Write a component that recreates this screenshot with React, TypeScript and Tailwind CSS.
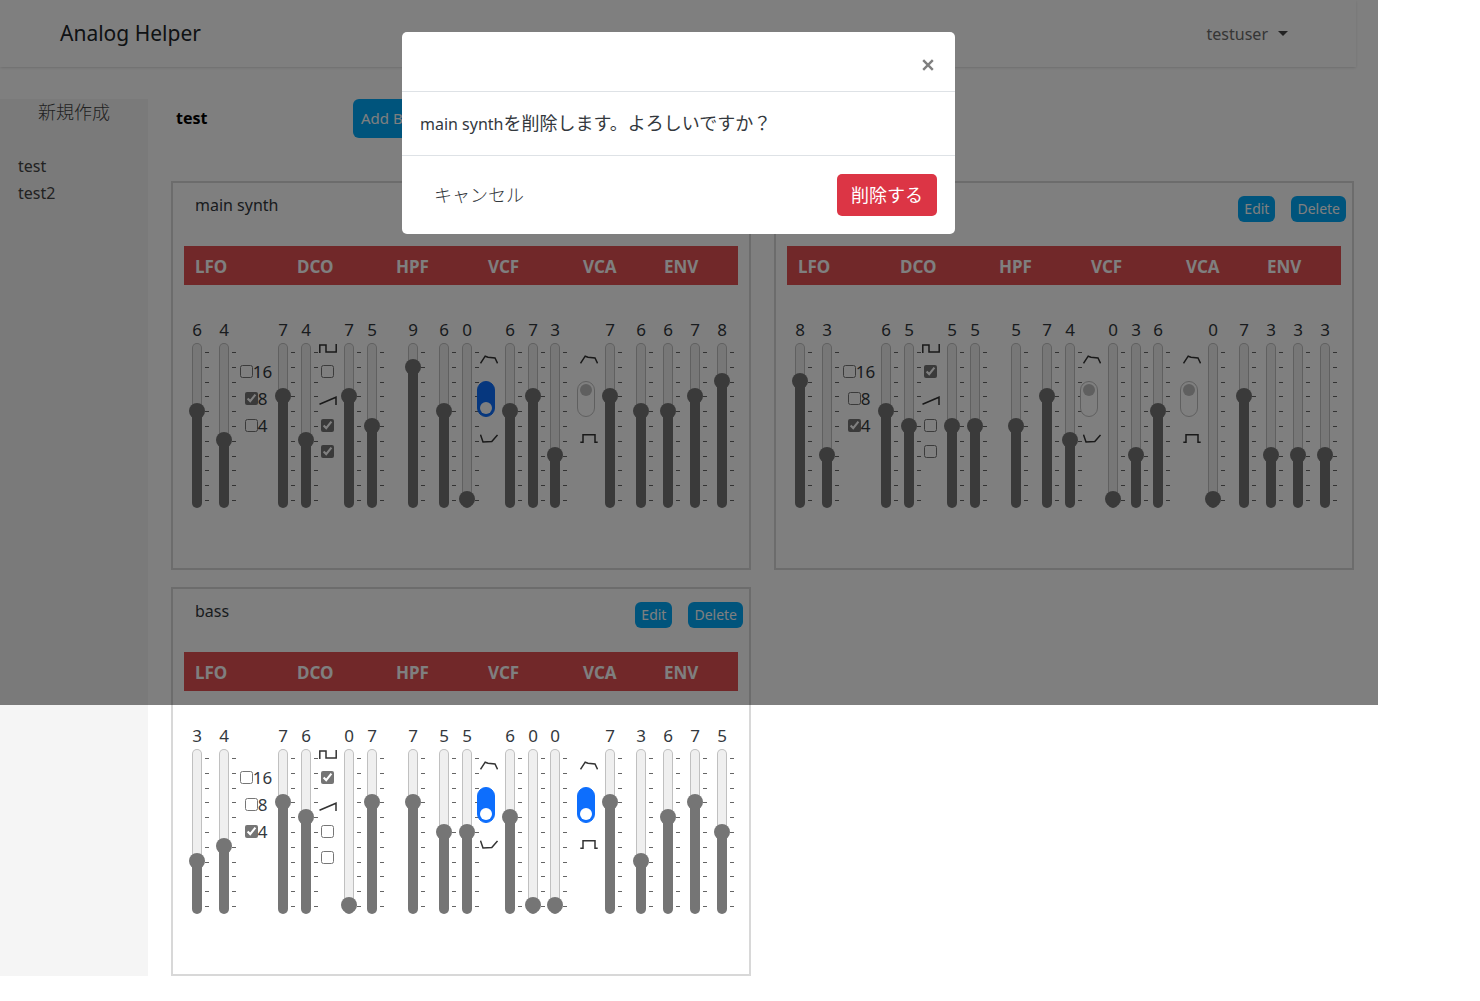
import React, { useState } from "react";

type Patch = {
  name: string;
  lfo: number[];
  octave: number;
  dcoA: number[];
  waves: boolean[];
  dcoB: number[];
  hpf: number;
  vcfA: number[];
  vcfPolarity: boolean;
  vcfB: number[];
  vcaMode: boolean;
  vca: number;
  env: number[];
};

const patches: Patch[] = [
  {
    name: "main synth",
    lfo: [6, 4],
    octave: 8,
    dcoA: [7, 4],
    waves: [false, true, true],
    dcoB: [7, 5],
    hpf: 9,
    vcfA: [6, 0],
    vcfPolarity: true,
    vcfB: [6, 7, 3],
    vcaMode: false,
    vca: 7,
    env: [6, 6, 7, 8],
  },
  {
    name: "sub synth",
    lfo: [8, 3],
    octave: 4,
    dcoA: [6, 5],
    waves: [true, false, false],
    dcoB: [5, 5],
    hpf: 5,
    vcfA: [7, 4],
    vcfPolarity: false,
    vcfB: [0, 3, 6],
    vcaMode: false,
    vca: 0,
    env: [7, 3, 3, 3],
  },
  {
    name: "bass",
    lfo: [3, 4],
    octave: 4,
    dcoA: [7, 6],
    waves: [true, false, false],
    dcoB: [0, 7],
    hpf: 7,
    vcfA: [5, 5],
    vcfPolarity: true,
    vcfB: [6, 0, 0],
    vcaMode: true,
    vca: 7,
    env: [3, 6, 7, 5],
  },
];

function Fader({ label, initial }: { label: string; initial: number }) {
  const [value, setValue] = useState(initial);
  const stop = `${8 + value * 15}px`;
  return (
    <label className="block min-w-0">
      <span className="flex h-[26px] w-[10px] items-center justify-center">{value}</span>
      <span className="flex gap-[3px]">
        <input
          type="range"
          aria-label={label}
          min={0}
          max={10}
          value={value}
          onChange={(e) => setValue(Number(e.target.value))}
          className="m-0 block h-[165px] w-[10px] shrink-0 appearance-none rounded-full border border-transparent [direction:rtl] [writing-mode:vertical-lr] [&::-webkit-slider-thumb]:-mr-[4px] [&::-webkit-slider-thumb]:-ml-[4px] [&::-webkit-slider-thumb]:h-4 [&::-webkit-slider-thumb]:w-4 [&::-webkit-slider-thumb]:appearance-none [&::-webkit-slider-thumb]:rounded-full [&::-webkit-slider-thumb]:bg-[#757575]"
          style={{
            background: `linear-gradient(to top, #757575 ${stop}, transparent ${stop}) border-box, linear-gradient(#efefef, #efefef) padding-box, linear-gradient(#c0c0c0, #c0c0c0) border-box`,
          }}
        />
        <span className="mt-[9px] flex h-[149px] w-1 shrink-0 flex-col justify-between">
          {Array.from({ length: 11 }, (_, i) => (
            <span key={i} className="h-px w-1 bg-[#666]" />
          ))}
        </span>
      </span>
    </label>
  );
}

function Glyph({ d, className }: { d: string; className: string }) {
  return (
    <svg viewBox="0 0 18 9" className={className} fill="none" stroke="#333" strokeWidth="1.5" aria-hidden="true">
      <path d={d} />
    </svg>
  );
}

const glyphs = {
  square: "M.8 9V1h6.200v7h10.200V0",
  ramp: "M.5 8.3 17 1.200V9",
  envelope: "M.5 8.3 5.2 1.2 8 2.3l7 .7 2.6 5.3",
  inverse: "M.5.7 3 8l8.800-.6L17.500.9",
  gate: "M.3 8.200h2.700V.8h12v7.400h2.700",
};

function Check({ label, initial }: { label: string; initial: boolean }) {
  return (
    <input
      type="checkbox"
      aria-label={label}
      defaultChecked={initial}
      className="m-0 h-[13px] w-[13px] shrink-0 accent-[#757575]"
    />
  );
}

function Toggle({ label, initial }: { label: string; initial: boolean }) {
  return (
    <input
      type="checkbox"
      role="switch"
      aria-label={label}
      defaultChecked={initial}
      className="m-0 block h-9 w-[18px] appearance-none rounded-full border border-[#bfbfbf] bg-white pt-[2px] pl-[2px] before:block before:h-3 before:w-3 before:rounded-full before:bg-[#bfbfbf] checked:border-[#0d6efd] checked:bg-[#0d6efd] checked:pt-5 checked:before:bg-white"
    />
  );
}

function ToggleColumn({ label, initial, lower }: { label: string; initial: boolean; lower: string }) {
  return (
    <div className="min-w-0 pt-[38px]">
      <Glyph d={glyphs.envelope} className="ml-[3px] block h-[9px] w-[18px]" />
      <div className="my-[17px]">
        <Toggle label={label} initial={initial} />
      </div>
      <Glyph d={lower} className="ml-[3px] block h-[9px] w-[18px]" />
    </div>
  );
}

const smallButton = "h-[26px] rounded-md bg-[#00a8f8] px-[6px] text-[14px] leading-[26px] text-white";

function PatchCard({ patch }: { patch: Patch }) {
  return (
    <section className="min-w-0 border-2 border-[#d8d8d8] pb-[60px]">
      <div className="flex h-[63px] items-start pr-[6px] pl-[22px]">
        <h2 className="mr-auto pt-[9px] text-[16px] leading-[26px]">{patch.name}</h2>
        <div className="flex gap-4 pt-[13px]">
          <button className={smallButton}>Edit</button>
          <button className={smallButton}>Delete</button>
        </div>
      </div>
      <div className="mx-[11px]">
        <div className="grid h-[39px] grid-cols-[102fr_99fr_92fr_95fr_81fr_74fr] items-center bg-[#e25052] pt-[2px] pl-[11px] font-bold text-white">
          <span>LFO</span>
          <span>DCO</span>
          <span>HPF</span>
          <span>VCF</span>
          <span>VCA</span>
          <span>ENV</span>
        </div>
        <div className="mt-8 grid grid-cols-[27fr_21fr_38fr_23fr_17fr_26fr_23fr_41fr_31fr_23fr_15fr_28fr_23fr_22fr_27fr_28fr_31fr_27fr_27fr_27fr_10fr] items-start pr-[11px] pl-2">
          <Fader label="LFO rate" initial={patch.lfo[0]} />
          <Fader label="LFO delay" initial={patch.lfo[1]} />
          <div className="flex min-w-0 flex-col items-center pt-[41px] pr-[6px]">
            {[16, 8, 4].map((n) => (
              <label key={n} className="flex h-[27px] items-center">
                <Check label={`Range ${n}`} initial={patch.octave === n} />
                {n}
              </label>
            ))}
          </div>
          <Fader label="DCO LFO" initial={patch.dcoA[0]} />
          <Fader label="DCO PWM" initial={patch.dcoA[1]} />
          <div className="flex w-[19px] min-w-0 flex-col items-center pt-[27px]">
            <Glyph d={glyphs.square} className="h-[9px] w-[18px]" />
            <div className="mt-[12px] flex">
              <Check label="Square wave" initial={patch.waves[0]} />
            </div>
            <Glyph d={glyphs.ramp} className="mt-[18px] h-[9px] w-[18px]" />
            <div className="mt-[14px] flex">
              <Check label="Saw wave" initial={patch.waves[1]} />
            </div>
            <div className="mt-[13px] flex">
              <Check label="Chorus" initial={patch.waves[2]} />
            </div>
          </div>
          <Fader label="DCO sub" initial={patch.dcoB[0]} />
          <Fader label="DCO noise" initial={patch.dcoB[1]} />
          <Fader label="HPF frequency" initial={patch.hpf} />
          <Fader label="VCF frequency" initial={patch.vcfA[0]} />
          <Fader label="VCF resonance" initial={patch.vcfA[1]} />
          <ToggleColumn label="VCF polarity" initial={patch.vcfPolarity} lower={glyphs.inverse} />
          <Fader label="VCF envelope" initial={patch.vcfB[0]} />
          <Fader label="VCF LFO" initial={patch.vcfB[1]} />
          <Fader label="VCF keyboard" initial={patch.vcfB[2]} />
          <ToggleColumn label="VCA mode" initial={patch.vcaMode} lower={glyphs.gate} />
          <Fader label="VCA level" initial={patch.vca} />
          <Fader label="Attack" initial={patch.env[0]} />
          <Fader label="Decay" initial={patch.env[1]} />
          <Fader label="Sustain" initial={patch.env[2]} />
          <Fader label="Release" initial={patch.env[3]} />
        </div>
      </div>
    </section>
  );
}

function DeleteDialog() {
  return (
    <div className="absolute inset-x-0 top-0 z-10 flex h-[705px] items-start justify-center bg-black/50 pt-8 pr-[21px]">
      <div role="dialog" aria-modal="true" className="w-[553px] rounded-[5px] bg-white">
        <div className="flex h-[60px] items-center justify-end border-b border-[#dee2e6] pt-[6px] pr-[18px]">
          <button aria-label="Close" className="flex h-[18px] w-[18px] items-center justify-center">
            <svg viewBox="0 0 12 12" className="h-3 w-3" stroke="#7f7f7f" strokeWidth="2.400" aria-hidden="true">
              <path d="M1.200 1.200 10.800 10.800M10.800 1.200 1.200 10.800" />
            </svg>
          </button>
        </div>
        <p className="h-[64px] border-b border-[#dee2e6] px-[18px] py-[18px] text-[18px] leading-[27px]">
          <span className="text-[16px]">main synth</span>を削除します。よろしいですか？
        </p>
        <div className="flex items-center justify-between px-[18px] py-[18px]">
          <button className="h-[42px] px-[14px] text-[18px] font-light">キャンセル</button>
          <button className="h-[42px] rounded-[5px] bg-[#dc3545] px-[14px] text-[18px] text-white">削除する</button>
        </div>
      </div>
    </div>
  );
}

export default function App() {
  return (
    <div className="min-h-screen bg-white font-['Noto_Sans','Noto_Sans_CJK_JP',sans-serif] text-[17px] text-[#33383d]">
      <div className="relative mr-[102px]">
        <header className="mr-[22px] flex h-[67px] items-center justify-between bg-white pr-[68px] pl-[60px] shadow-sm">
          <a href="#" className="text-[21px] text-[#212529]">
            Analog Helper
          </a>
          <button className="flex items-center gap-[10px] text-[16px] text-[#6c6c6c]">
            testuser
            <span className="border-x-[5px] border-t-[5px] border-x-transparent border-t-[#444]" />
          </button>
        </header>
        <div className="mt-8 flex">
          <aside className="w-[148px] shrink-0 bg-[#f5f5f5] text-[#444]">
            <a href="#" className="block text-center text-[18px] leading-[27px] font-light">
              新規作成
            </a>
            <nav className="mt-[27px] flex flex-col pl-[18px] text-[16px] leading-[27px]">
              <a href="#">test</a>
              <a href="#">test2</a>
            </nav>
          </aside>
          <main className="min-w-0 grow pr-6 pl-[23px]">
            <div className="flex h-[82px] items-start pl-[5px]">
              <h1 className="w-[177px] text-[16px] leading-[39px] font-bold text-black">test</h1>
              <button className="h-[39px] rounded-md bg-[#00a8f8] px-2 text-[15px] text-white">Add Board</button>
            </div>
            <div className="grid grid-cols-2 gap-x-[23px] gap-y-[17px]">
              {patches.map((patch) => (
                <PatchCard key={patch.name} patch={patch} />
              ))}
            </div>
          </main>
        </div>
        <DeleteDialog />
      </div>
    </div>
  );
}
